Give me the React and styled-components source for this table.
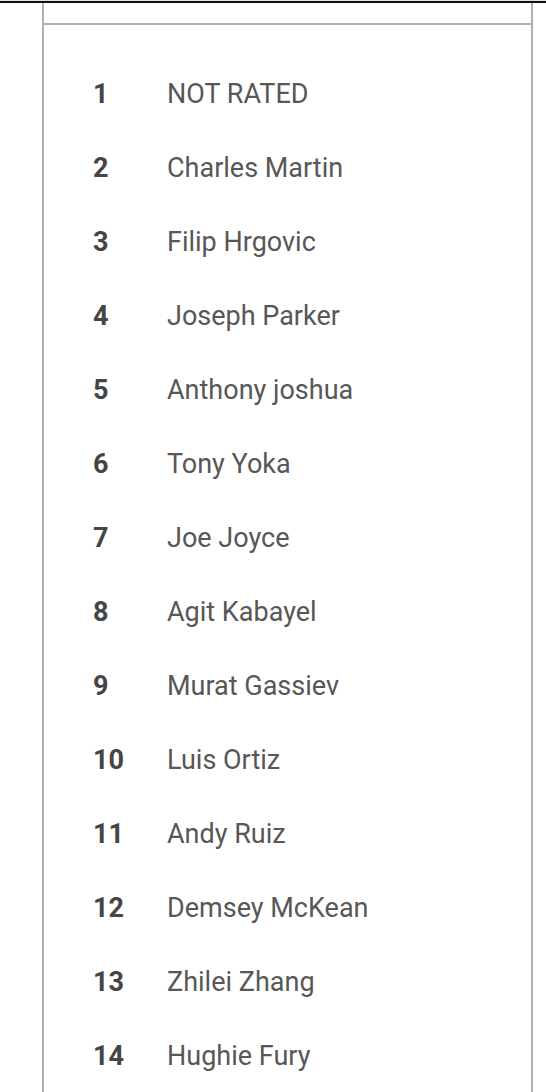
import React from "react";
import styled, { createGlobalStyle } from "styled-components";

const GlobalStyle = createGlobalStyle`
  html, body {
    margin: 0;
    padding: 0;
    background: #fff;
  }
  body {
    font-family: "Roboto", "Liberation Sans", sans-serif;
  }
`;

const Page = styled.div`
  width: 546px;
  height: 1092px;
  overflow: hidden;
  border-top: 1px solid #e2e2e2;
`;

const TopRule = styled.div`
  height: 2px;
  background: #111;
`;

const Panel = styled.div`
  margin: 0 13px 0 42px;
  border-left: 2px solid #b0b0b0;
  border-right: 2px solid #b0b0b0;
  height: 1100px;
`;

const PanelHead = styled.div`
  height: 20px;
  border-bottom: 2px solid #b0b0b0;
`;

const List = styled.ol`
  list-style: none;
  margin: 0;
  padding: 32px 0 0 49px;
`;

const Row = styled.li`
  display: flex;
  align-items: center;
  height: 74px;
  font-size: 27px;
`;

const Rank = styled.span`
  width: 74px;
  flex-shrink: 0;
  font-weight: 700;
  color: #454545;
`;

const Name = styled.span`
  color: #575757;
`;

const fighters = [
  "NOT RATED",
  "Charles Martin",
  "Filip Hrgovic",
  "Joseph Parker",
  "Anthony joshua",
  "Tony Yoka",
  "Joe Joyce",
  "Agit Kabayel",
  "Murat Gassiev",
  "Luis Ortiz",
  "Andy Ruiz",
  "Demsey McKean",
  "Zhilei Zhang",
  "Hughie Fury",
];

const App = () => (
  <>
    <GlobalStyle />
    <Page>
      <TopRule />
      <Panel>
        <PanelHead />
        <List>
          {fighters.map((name, i) => (
            <Row key={name}>
              <Rank>{i + 1}</Rank>
              <Name>{name}</Name>
            </Row>
          ))}
        </List>
      </Panel>
    </Page>
  </>
);

export default App;
